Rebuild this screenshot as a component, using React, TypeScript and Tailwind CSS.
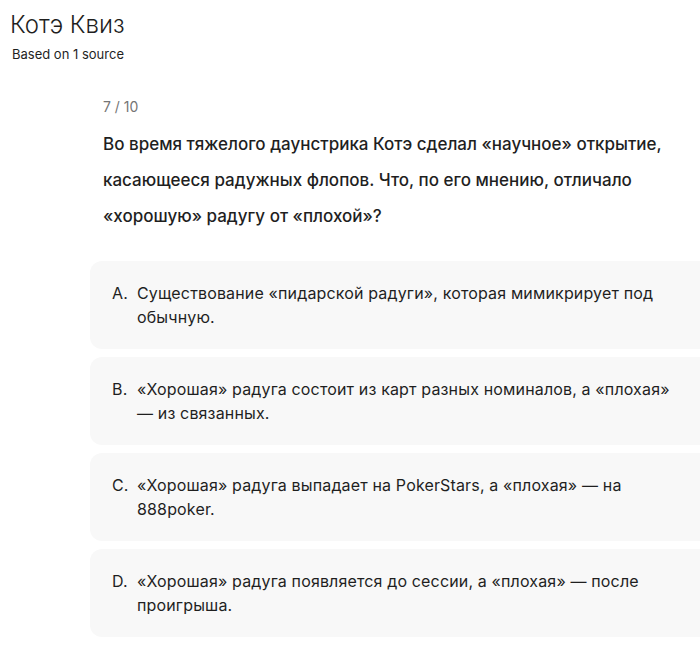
export default function App() {
    const options = [
        { key: 'A', text: 'Существование «пидарской радуги», которая мимикрирует под обычную.' },
        { key: 'B', text: '«Хорошая» радуга состоит из карт разных номиналов, а «плохая» — из связанных.' },
        { key: 'C', text: '«Хорошая» радуга выпадает на PokerStars, а «плохая» — на 888poker.' },
        { key: 'D', text: '«Хорошая» радуга появляется до сессии, а «плохая» — после проигрыша.' },
    ];

    return (
        <div className="w-[700px] h-[647px] overflow-hidden bg-white text-[#1f1f1f] font-['Inter','Noto_Sans',sans-serif]">
            {/* Header */}
            <div className="pl-[10px] pt-[10px]">
                <h1 className="text-[24px] leading-[30px] font-light text-[#1f1f1f]">Котэ Квиз</h1>
                <div className="pl-[2px] mt-[5px] text-[13px] leading-[18px] text-[#1f1f1f]">Based on 1 source</div>
            </div>

            {/* Question */}
            <div className="pl-[103px] mt-[34px]">
                <div className="text-[14px] leading-[20px] text-[#757575]">7 / 10</div>
                <p className="mt-[9px] w-[580px] text-[17px] leading-[36px] font-medium text-[#1f1f1f]">
                    Во время тяжелого даунстрика Котэ сделал «научное» открытие, касающееся радужных флопов. Что, по его мнению, отличало «хорошую» радугу от «плохой»?
                </p>
            </div>

            {/* Options */}
            <div className="ml-[90px] mt-[27px] w-[640px] flex flex-col gap-[8px]">
                {options.map((o) => (
                    <div key={o.key} className="h-[88px] rounded-[12px] bg-[#f8f8f8] pl-[22px] pr-[20px] pt-[20px] flex text-[16px] leading-[24px] tracking-[0.15px] text-[#1f1f1f]">
                        <span className="w-[25px] shrink-0">{o.key}.</span>
                        <span className="w-[535px]">{o.text}</span>
                    </div>
                ))}
            </div>
        </div>
    );
}
